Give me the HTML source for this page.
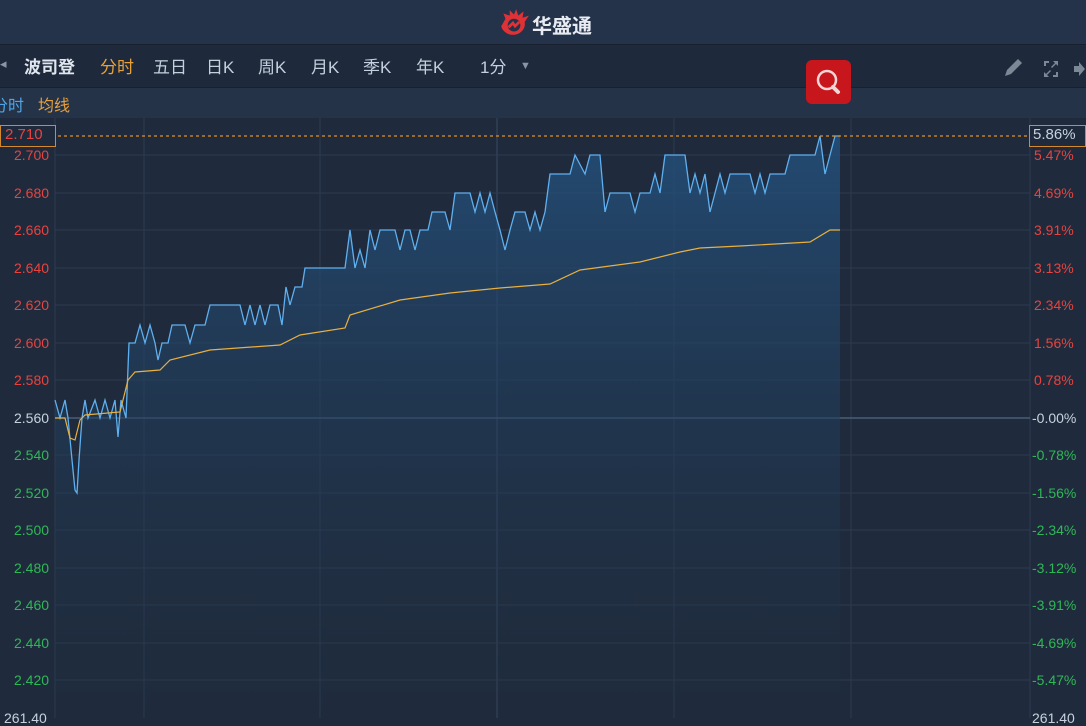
<!DOCTYPE html>
<html><head><meta charset="utf-8"><style>
*{margin:0;padding:0;box-sizing:border-box}
body{width:1086px;height:718px;overflow:hidden;background:#1f2b3c;font-family:"Liberation Sans","Noto Sans CJK SC",sans-serif;position:relative}
.hdr{position:absolute;left:0;top:0;width:1086px;height:45px;background:#25334a;border-bottom:1px solid #17202c}
.tb{position:absolute;left:0;top:46px;width:1086px;height:42px;background:#1e2a3b;border-bottom:1px solid #17202c}
.lg{position:absolute;left:0;top:88px;width:1086px;height:30px;background:#253349}
.t{position:absolute;font-size:17px;color:#c5d0de;white-space:nowrap}
.ax{position:absolute;font-size:14px;white-space:nowrap}
.r{color:#e8433f}.g{color:#2fb757}.w{color:#c8d2de}
</style></head><body>
<div class="hdr"></div>
<svg style="position:absolute;left:497px;top:9px" width="34" height="28" viewBox="0 0 32 26"><path d="M4 16 A10 9 0 1 0 26 12 L30 6 L24 8 L25 2 L20 6 L18 0 L16 5 L12 1 L12 6 L6 4 L8 9 Z" fill="#e03236"/><circle cx="16" cy="15" r="6" fill="#25334a"/><path d="M11 17 L15 13 L17 16 L21 12" stroke="#e03236" stroke-width="2.5" fill="none"/></svg>
<div class="t" style="left:532px;top:10px;font-size:20px;font-weight:bold;color:#e8ecf2">华盛通</div>
<div class="tb"></div>
<div class="t" style="left:0;top:56px;color:#8a96a6;font-size:13px">◂</div>
<div class="t" style="left:24px;top:53px;font-weight:bold;color:#dfe6ef">波司登</div>
<div class="t" style="left:100px;top:53px;color:#e8a13a">分时</div>
<div class="t" style="left:153px;top:53px">五日</div>
<div class="t" style="left:206px;top:53px">日K</div>
<div class="t" style="left:258px;top:53px">周K</div>
<div class="t" style="left:311px;top:53px">月K</div>
<div class="t" style="left:363px;top:53px">季K</div>
<div class="t" style="left:416px;top:53px">年K</div>
<div class="t" style="left:480px;top:53px">1分</div>
<div class="t" style="left:520px;top:60px;font-size:11px;color:#8a96a6">▼</div>
<svg style="position:absolute;left:1000px;top:56px" width="86" height="26"><path d="M5 20 L7 14 L18 3 L22 7 L11 18 Z" fill="#7d8896"/><path d="M44 5h5v2h-3v3h-2zM58 5h-5l2 2l-4 4l1 1l4-4l2 2zM44 21v-5l2 2l4-4l1 1l-4 4l2 2zM58 21h-5v-2h3v-3h2z" fill="#7d8896"/><path d="M74 10h5v-4l6 7l-6 7v-4h-5z" fill="#7d8896"/></svg>
<div class="lg"></div>
<div style="position:absolute;left:806px;top:60px;width:45px;height:44px;background:#c8161d;border-radius:6px"></div>
<svg style="position:absolute;left:806px;top:60px" width="45" height="44"><circle cx="21" cy="20" r="9" stroke="#f2d6d6" stroke-width="2.5" fill="none"/><path d="M27 27 L32 32" stroke="#f2d6d6" stroke-width="4" stroke-linecap="round"/></svg>
<div class="t" style="left:-8px;top:92px;font-size:16px;color:#4ea6e8">分时</div>
<div class="t" style="left:38px;top:92px;font-size:16px;color:#e8a13a">均线</div>
<svg style="position:absolute;left:0;top:0" width="1086" height="718">
<defs><linearGradient id="f" x1="0" y1="0" x2="0" y2="1"><stop offset="0" stop-color="#24507c" stop-opacity=".85"/><stop offset="1" stop-color="#1f2b3c" stop-opacity=".2"/></linearGradient></defs>
<g stroke="#2c3b52" stroke-width="1">
<line x1="55" y1="118" x2="55" y2="718"/><line x1="1030" y1="118" x2="1030" y2="718"/>
<line x1="144" y1="118" x2="144" y2="718"/><line x1="320" y1="118" x2="320" y2="718"/><line x1="497" y1="118" x2="497" y2="718" stroke="#3a4a63"/><line x1="674" y1="118" x2="674" y2="718"/><line x1="851" y1="118" x2="851" y2="718"/>
<line x1="55" y1="155" x2="1030" y2="155"/><line x1="55" y1="193" x2="1030" y2="193"/><line x1="55" y1="230" x2="1030" y2="230"/><line x1="55" y1="268" x2="1030" y2="268"/><line x1="55" y1="305" x2="1030" y2="305"/><line x1="55" y1="343" x2="1030" y2="343"/><line x1="55" y1="380" x2="1030" y2="380"/><line x1="55" y1="455" x2="1030" y2="455"/><line x1="55" y1="493" x2="1030" y2="493"/><line x1="55" y1="530" x2="1030" y2="530"/><line x1="55" y1="568" x2="1030" y2="568"/><line x1="55" y1="605" x2="1030" y2="605"/><line x1="55" y1="643" x2="1030" y2="643"/><line x1="55" y1="680" x2="1030" y2="680"/>
</g>
<line x1="55" y1="418" x2="1030" y2="418" stroke="#4a5d78" stroke-width="1.5"/>
<polygon fill="url(#f)" points="55,718 55,400 60,418 65,400 68,418 72,460 75,490 77,493 79,460 82,418 85,400 88,418 95,400 100,418 105,400 110,418 115,400 118,437 121,400 126,418 129,343 135,343 140,325 145,343 150,325 155,343 158,360 162,343 168,343 172,325 185,325 190,343 195,325 205,325 210,305 240,305 245,325 250,305 255,325 260,305 265,325 270,305 278,305 282,325 286,287 290,305 295,287 302,287 305,268 345,268 350,230 355,268 360,250 365,268 370,230 375,250 380,230 395,230 400,250 405,230 410,230 415,250 420,230 428,230 432,212 445,212 450,230 455,193 470,193 475,212 480,193 485,212 490,193 495,212 500,230 505,250 510,230 515,212 525,212 530,230 535,212 540,230 545,212 550,174 570,174 575,155 585,174 590,155 600,155 605,212 610,193 630,193 635,212 640,193 650,193 655,174 660,193 665,155 685,155 690,193 695,174 700,193 705,174 710,212 715,193 720,174 725,193 730,174 750,174 755,193 760,174 765,193 770,174 785,174 790,155 815,155 820,136 825,174 830,155 835,136 840,136 840,718"/>
<polyline fill="none" stroke="#5fb0f0" stroke-width="1.3" points="55,400 60,418 65,400 68,418 72,460 75,490 77,493 79,460 82,418 85,400 88,418 95,400 100,418 105,400 110,418 115,400 118,437 121,400 126,418 129,343 135,343 140,325 145,343 150,325 155,343 158,360 162,343 168,343 172,325 185,325 190,343 195,325 205,325 210,305 240,305 245,325 250,305 255,325 260,305 265,325 270,305 278,305 282,325 286,287 290,305 295,287 302,287 305,268 345,268 350,230 355,268 360,250 365,268 370,230 375,250 380,230 395,230 400,250 405,230 410,230 415,250 420,230 428,230 432,212 445,212 450,230 455,193 470,193 475,212 480,193 485,212 490,193 495,212 500,230 505,250 510,230 515,212 525,212 530,230 535,212 540,230 545,212 550,174 570,174 575,155 585,174 590,155 600,155 605,212 610,193 630,193 635,212 640,193 650,193 655,174 660,193 665,155 685,155 690,193 695,174 700,193 705,174 710,212 715,193 720,174 725,193 730,174 750,174 755,193 760,174 765,193 770,174 785,174 790,155 815,155 820,136 825,174 830,155 835,136 840,136"/>
<polyline fill="none" stroke="#e8b040" stroke-width="1.2" points="55,418 65,418 70,438 75,440 80,420 85,415 120,412 128,380 135,372 160,370 170,360 210,350 280,345 300,335 345,328 350,315 400,300 450,293 500,288 550,284 580,270 640,262 680,252 700,248 740,246 810,242 830,230 840,230"/>
<line x1="58" y1="136" x2="1030" y2="136" stroke="#e0902a" stroke-width="1.2" stroke-dasharray="3,3"/>
</svg>
<div class="ax r" style="left:14px;top:147px">2.700</div>
<div style="position:absolute;left:0;top:125px;width:56px;height:22px;border:1px solid #d3892c;background:#1f2b3c"></div>
<div class="ax r" style="left:5px;top:126px;font-size:15px">2.710</div>
<div class="ax r" style="left:14px;top:185px">2.680</div>
<div class="ax r" style="left:14px;top:222px">2.660</div>
<div class="ax r" style="left:14px;top:260px">2.640</div>
<div class="ax r" style="left:14px;top:297px">2.620</div>
<div class="ax r" style="left:14px;top:335px">2.600</div>
<div class="ax r" style="left:14px;top:372px">2.580</div>
<div class="ax w" style="left:14px;top:410px">2.560</div>
<div class="ax g" style="left:14px;top:447px">2.540</div>
<div class="ax g" style="left:14px;top:485px">2.520</div>
<div class="ax g" style="left:14px;top:522px">2.500</div>
<div class="ax g" style="left:14px;top:560px">2.480</div>
<div class="ax g" style="left:14px;top:597px">2.460</div>
<div class="ax g" style="left:14px;top:635px">2.440</div>
<div class="ax g" style="left:14px;top:672px">2.420</div>
<div class="ax w" style="left:4px;top:710px">261.40</div>
<div class="ax w" style="left:1032px;top:710px">261.40</div>
<div class="ax r" style="left:1034px;top:147px">5.47%</div>
<div style="position:absolute;left:1029px;top:125px;width:57px;height:22px;border:1px solid #d3892c;background:#1f2b3c"></div>
<div class="ax w" style="left:1033px;top:126px;font-size:15px">5.86%</div>
<div class="ax r" style="left:1034px;top:185px">4.69%</div>
<div class="ax r" style="left:1034px;top:222px">3.91%</div>
<div class="ax r" style="left:1034px;top:260px">3.13%</div>
<div class="ax r" style="left:1034px;top:297px">2.34%</div>
<div class="ax r" style="left:1034px;top:335px">1.56%</div>
<div class="ax r" style="left:1034px;top:372px">0.78%</div>
<div class="ax w" style="left:1032px;top:410px">-0.00%</div>
<div class="ax g" style="left:1032px;top:447px">-0.78%</div>
<div class="ax g" style="left:1032px;top:485px">-1.56%</div>
<div class="ax g" style="left:1032px;top:522px">-2.34%</div>
<div class="ax g" style="left:1032px;top:560px">-3.12%</div>
<div class="ax g" style="left:1032px;top:597px">-3.91%</div>
<div class="ax g" style="left:1032px;top:635px">-4.69%</div>
<div class="ax g" style="left:1032px;top:672px">-5.47%</div>
</body></html>
